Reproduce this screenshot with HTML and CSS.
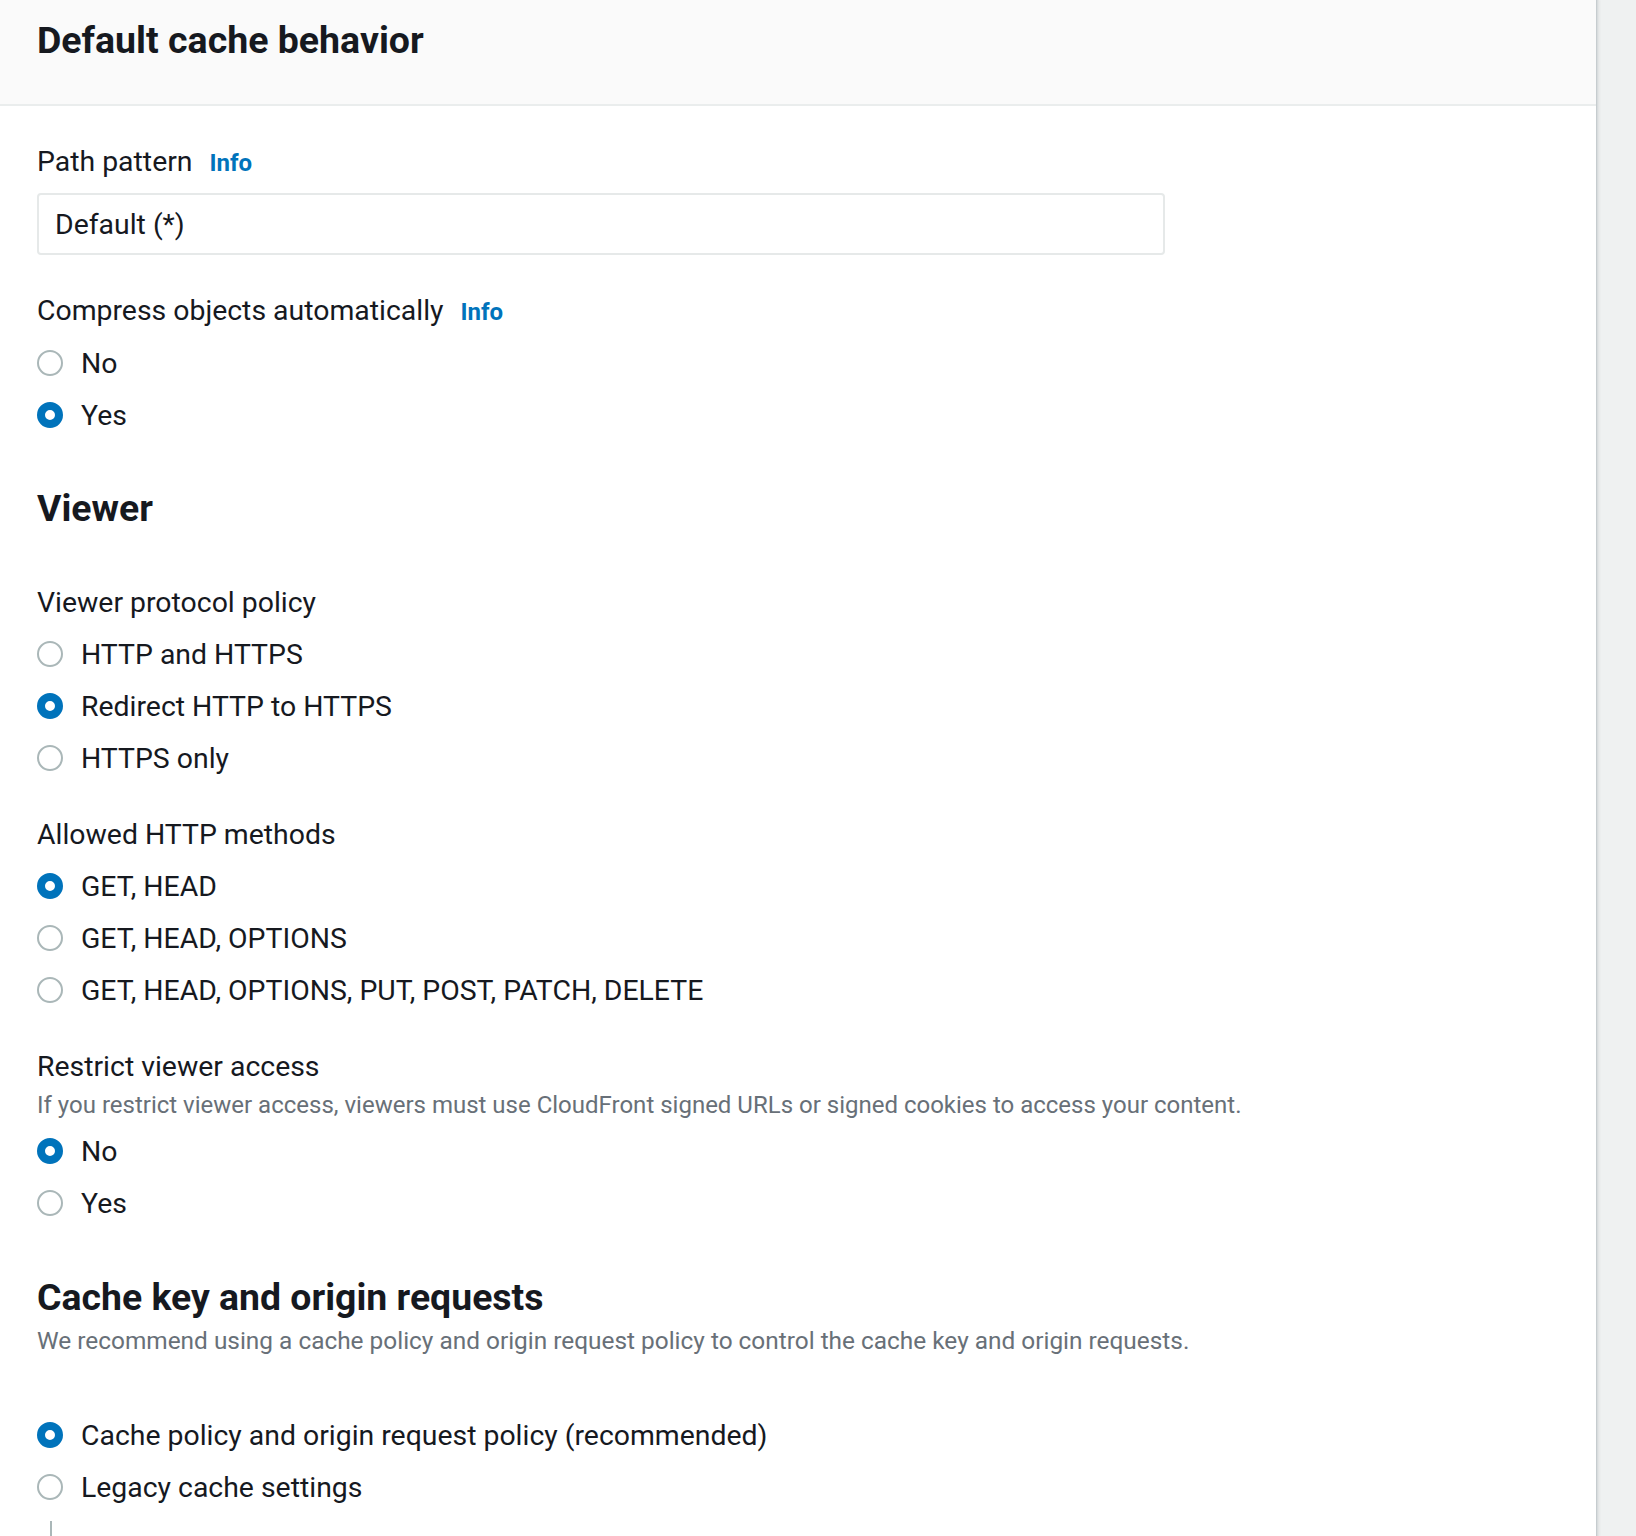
FILE: index.html
```html
<!DOCTYPE html>
<html lang="en">
<head>
<meta charset="utf-8">
<title>Default cache behavior</title>
<link rel="stylesheet" href="styles.css">
</head>
<body>
<div class="page">
  <section class="card">
    <header class="card-header">
      <h2 class="card-title">Default cache behavior</h2>
    </header>
    <div class="card-body">
      <div class="field field-first">
        <div class="label">Path pattern <a class="info" href="#">Info</a></div>
        <div class="input">Default (*)</div>
      </div>

      <div class="field field-after-input">
        <div class="label">Compress objects automatically <a class="info" href="#">Info</a></div>
        <div class="radios">
          <label class="radio-row"><input class="radio" type="radio" name="compress"><span>No</span></label>
          <label class="radio-row"><input class="radio" type="radio" name="compress" checked><span>Yes</span></label>
        </div>
      </div>

      <h3 class="section-title section-viewer">Viewer</h3>

      <div class="field field-first-in-section">
        <div class="label">Viewer protocol policy</div>
        <div class="radios">
          <label class="radio-row"><input class="radio" type="radio" name="vpp"><span>HTTP and HTTPS</span></label>
          <label class="radio-row"><input class="radio" type="radio" name="vpp" checked><span>Redirect HTTP to HTTPS</span></label>
          <label class="radio-row"><input class="radio" type="radio" name="vpp"><span>HTTPS only</span></label>
        </div>
      </div>

      <div class="field">
        <div class="label">Allowed HTTP methods</div>
        <div class="radios">
          <label class="radio-row"><input class="radio" type="radio" name="methods" checked><span>GET, HEAD</span></label>
          <label class="radio-row"><input class="radio" type="radio" name="methods"><span>GET, HEAD, OPTIONS</span></label>
          <label class="radio-row"><input class="radio" type="radio" name="methods"><span>GET, HEAD, OPTIONS, PUT, POST, PATCH, DELETE</span></label>
        </div>
      </div>

      <div class="field">
        <div class="label">Restrict viewer access</div>
        <div class="description">If you restrict viewer access, viewers must use CloudFront signed URLs or signed cookies to access your content.</div>
        <div class="radios">
          <label class="radio-row"><input class="radio" type="radio" name="restrict" checked><span>No</span></label>
          <label class="radio-row"><input class="radio" type="radio" name="restrict"><span>Yes</span></label>
        </div>
      </div>

      <h3 class="section-title section-cache">Cache key and origin requests</h3>
      <div class="description section-desc">We recommend using a cache policy and origin request policy to control the cache key and origin requests.</div>

      <div class="radios radios-cache">
        <label class="radio-row"><input class="radio" type="radio" name="cachekey" checked><span>Cache policy and origin request policy (recommended)</span></label>
        <label class="radio-row"><input class="radio" type="radio" name="cachekey"><span>Legacy cache settings</span></label>
      </div>
      <div class="nested"></div>
    </div>
  </section>
  <aside class="side"></aside>
</div>
</body>
</html>
```
FILE: styles.css
```css
html, body {
  margin: 0;
  padding: 0;
}

body {
  font-family: Roboto, "Liberation Sans", Arial, sans-serif;
  color: #16191f;
  background: #eff1f1;
  -webkit-font-smoothing: antialiased;
}

.page {
  display: flex;
  min-height: 1536px;
  overflow: hidden;
}

.card {
  width: 1597px;
  flex: none;
  background: #ffffff;
  border-right: 1px solid #c6cccf;
  box-shadow: 1px 0 0 #d8dcdd, 2px 0 0 #e2e5e6, 3px 0 2px rgba(0, 0, 0, 0.04);
  height: 1536px;
  box-sizing: border-box;
}

.side {
  flex: 1;
}

.card-header {
  height: 106px;
  box-sizing: border-box;
  background: #fafafa;
  border-bottom: 2px solid #eaeded;
  padding: 18px 37px 0;
}

.card-title {
  margin: 0;
  font-size: 37.5px;
  line-height: 44px;
  font-weight: 700;
  color: #16191f;
}

.card-body {
  padding: 36px 37px 0;
}

.label {
  font-size: 28.4px;
  line-height: 40px;
  color: #16191f;
}

.info {
  margin-left: 10px;
  font-size: 24px;
  font-weight: 700;
  color: #0073bb;
  text-decoration: none;
}

.input {
  margin-top: 10px;
  width: 1128px;
  height: 62px;
  box-sizing: border-box;
  border: 2px solid #e6e9e9;
  border-radius: 4px;
  padding: 0 16px;
  display: flex;
  align-items: center;
  font-size: 28.4px;
  color: #16191f;
}

.field {
  margin-top: 31px;
}

.field-first {
  margin-top: 0;
}

.field-after-input {
  margin-top: 36px;
}

.field-first-in-section {
  margin-top: 51px;
}

.radios {
  margin-top: 5px;
  display: flex;
  flex-direction: column;
}

.radio-row {
  display: flex;
  align-items: center;
  gap: 18px;
  height: 52px;
  font-size: 28.4px;
  color: #16191f;
}

.radio {
  -webkit-appearance: none;
  appearance: none;
  margin: 0;
  width: 26px;
  height: 26px;
  flex: none;
  box-sizing: border-box;
  border: 2px solid #aab7b8;
  border-radius: 50%;
  background: #ffffff;
}

.radio:checked {
  border: 8px solid #0073bb;
}

.description {
  font-size: 24px;
  line-height: 36px;
  color: #687078;
}

.field .description + .radios {
  margin-top: 2px;
}

.section-title {
  margin: 0;
  font-size: 37.4px;
  line-height: 48px;
  font-weight: 700;
  color: #16191f;
}

.section-viewer {
  margin-top: 43px;
}

.section-cache {
  margin-top: 44px;
}

.section-desc {
  margin-top: 2px;
  font-size: 24.4px;
}

.radios-cache {
  margin-top: 50px;
}

.nested {
  margin-top: 8px;
  margin-left: 13px;
  height: 40px;
  border-left: 2px solid #aab7b8;
}
```
